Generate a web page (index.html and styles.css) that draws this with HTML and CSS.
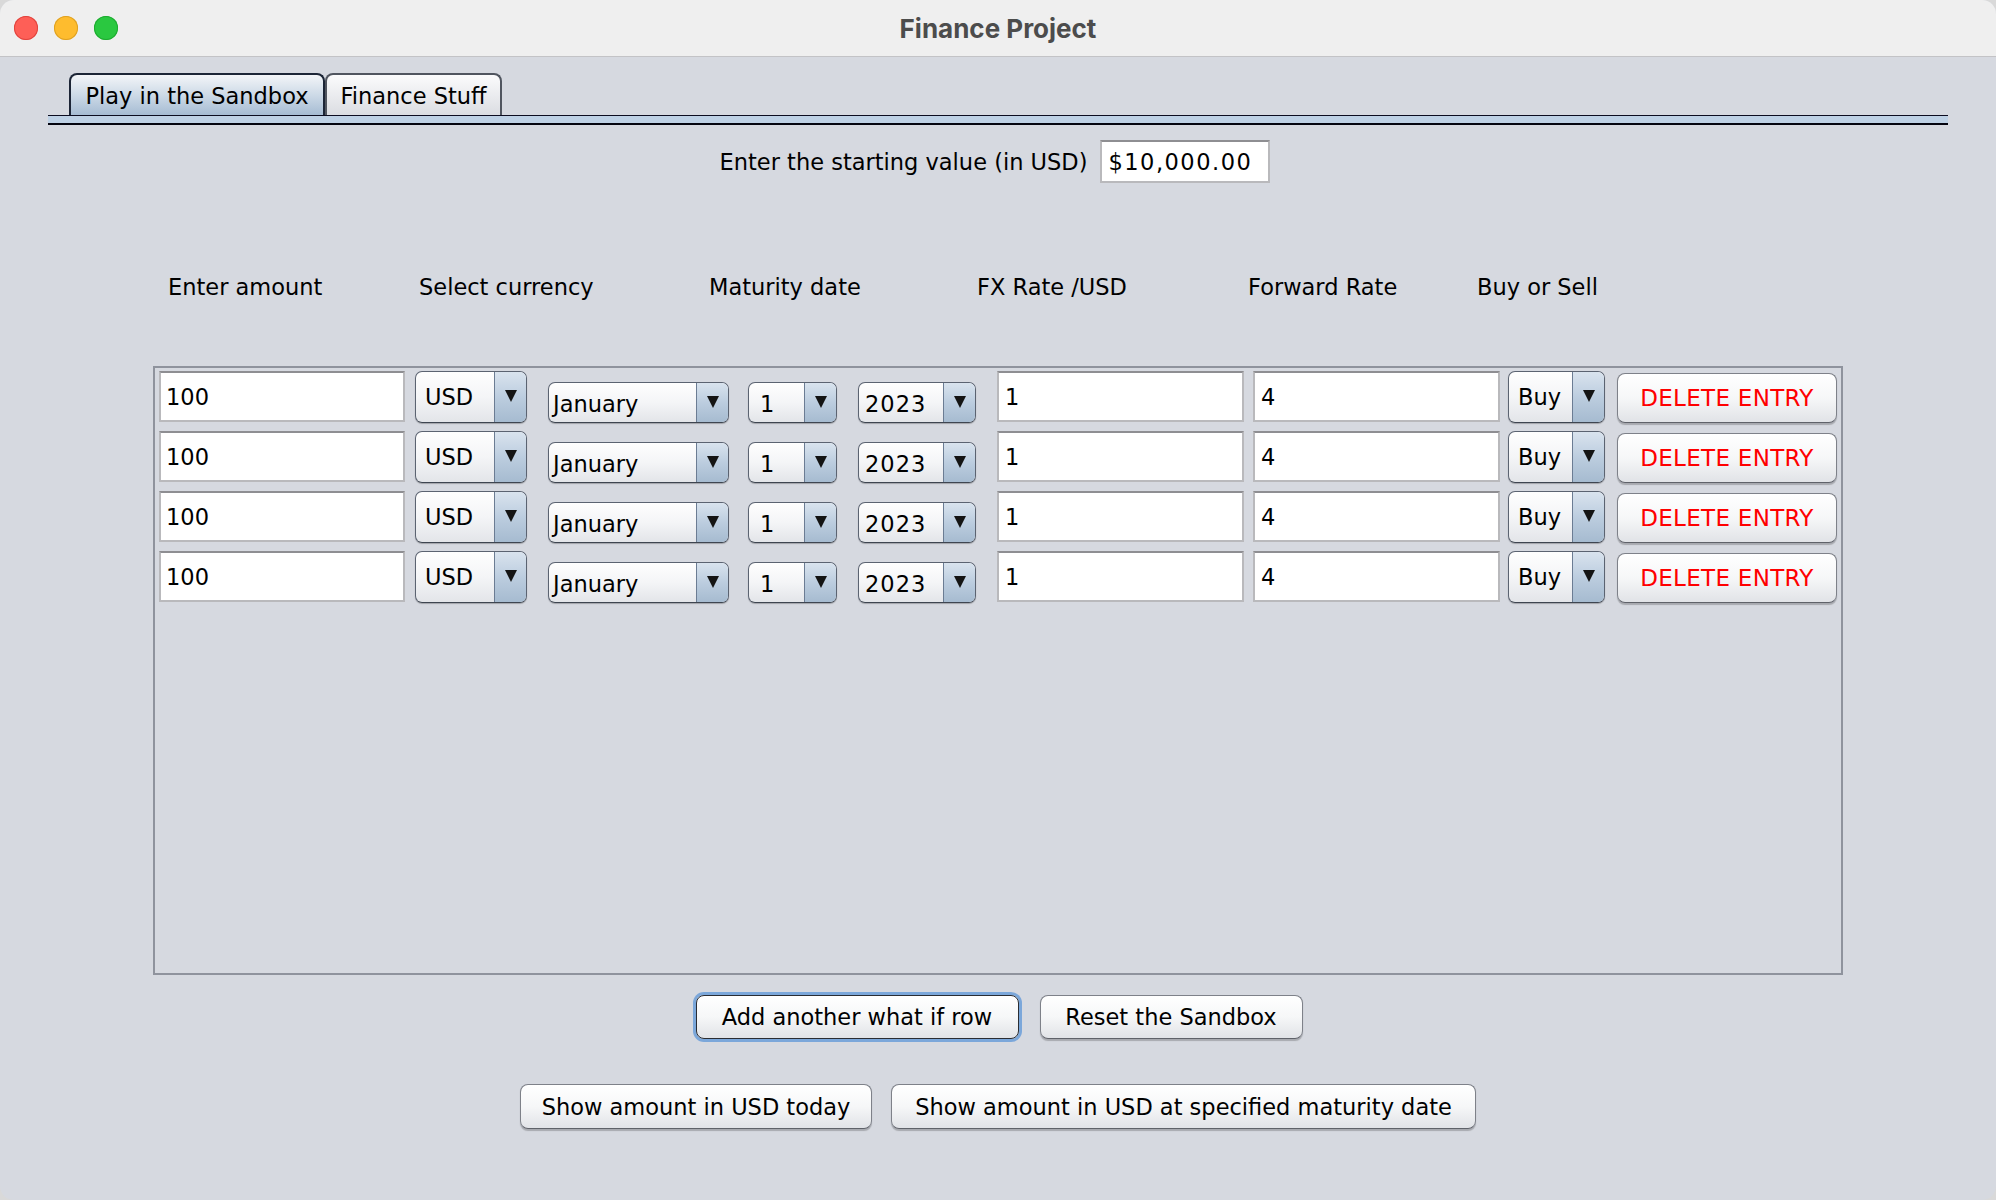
FILE: index.html
```html
<!DOCTYPE html>
<html>
<head>
<meta charset="utf-8">
<title>Finance Project</title>
<link rel="stylesheet" href="styles.css">
</head>
<body>
<div class="window">
  <div class="titlebar">
    <div class="lights">
      <span class="light red"></span>
      <span class="light yellow"></span>
      <span class="light green"></span>
    </div>
    <div class="title">Finance Project</div>
    <div></div>
  </div>
  <div class="content">
    <div class="tabs">
      <div class="tab tab-sandbox selected">Play in the Sandbox</div>
      <div class="tab tab-finance">Finance Stuff</div>
    </div>
    <div class="tab-rule"></div>

    <div class="start-row">
      <span class="start-label">Enter the starting value (in USD)</span>
      <div class="field start-field">$10,000.00</div>
    </div>

    <div class="headers">
      <span class="h h-amount">Enter amount</span>
      <span class="h h-currency">Select currency</span>
      <span class="h h-maturity">Maturity date</span>
      <span class="h h-fx">FX Rate /USD</span>
      <span class="h h-forward">Forward Rate</span>
      <span class="h h-buy">Buy or Sell</span>
    </div>

    <div class="panel">
      <div class="row">
        <div class="field amount">100</div>
        <div class="combo tall cur"><span class="v">USD</span><span class="a"></span></div>
        <div class="combo short month"><span class="v">January</span><span class="a"></span></div>
        <div class="combo short day"><span class="v">1</span><span class="a"></span></div>
        <div class="combo short year"><span class="v">2023</span><span class="a"></span></div>
        <div class="field rate fx">1</div>
        <div class="field rate fwd">4</div>
        <div class="combo tall buy"><span class="v">Buy</span><span class="a"></span></div>
        <div class="btn delete">DELETE ENTRY</div>
      </div>
      <div class="row">
        <div class="field amount">100</div>
        <div class="combo tall cur"><span class="v">USD</span><span class="a"></span></div>
        <div class="combo short month"><span class="v">January</span><span class="a"></span></div>
        <div class="combo short day"><span class="v">1</span><span class="a"></span></div>
        <div class="combo short year"><span class="v">2023</span><span class="a"></span></div>
        <div class="field rate fx">1</div>
        <div class="field rate fwd">4</div>
        <div class="combo tall buy"><span class="v">Buy</span><span class="a"></span></div>
        <div class="btn delete">DELETE ENTRY</div>
      </div>
      <div class="row">
        <div class="field amount">100</div>
        <div class="combo tall cur"><span class="v">USD</span><span class="a"></span></div>
        <div class="combo short month"><span class="v">January</span><span class="a"></span></div>
        <div class="combo short day"><span class="v">1</span><span class="a"></span></div>
        <div class="combo short year"><span class="v">2023</span><span class="a"></span></div>
        <div class="field rate fx">1</div>
        <div class="field rate fwd">4</div>
        <div class="combo tall buy"><span class="v">Buy</span><span class="a"></span></div>
        <div class="btn delete">DELETE ENTRY</div>
      </div>
      <div class="row">
        <div class="field amount">100</div>
        <div class="combo tall cur"><span class="v">USD</span><span class="a"></span></div>
        <div class="combo short month"><span class="v">January</span><span class="a"></span></div>
        <div class="combo short day"><span class="v">1</span><span class="a"></span></div>
        <div class="combo short year"><span class="v">2023</span><span class="a"></span></div>
        <div class="field rate fx">1</div>
        <div class="field rate fwd">4</div>
        <div class="combo tall buy"><span class="v">Buy</span><span class="a"></span></div>
        <div class="btn delete">DELETE ENTRY</div>
      </div>
    </div>

    <div class="btn-row first">
      <div class="btn focused add">Add another what if row</div>
      <div class="btn reset">Reset the Sandbox</div>
    </div>
    <div class="btn-row second">
      <div class="btn today">Show amount in USD today</div>
      <div class="btn maturity">Show amount in USD at specified maturity date</div>
    </div>
  </div>
</div>
</body>
</html>
```

FILE: styles.css
```css
* { box-sizing: border-box; }

html, body {
  margin: 0;
  padding: 0;
}

body {
  background: #d9d9d9;
  font-family: "DejaVu Sans", "Liberation Sans", sans-serif;
}

.window {
  width: 1996px;
  height: 1200px;
  border-radius: 14px;
  overflow: hidden;
  background: #d6d9e0;
  display: flex;
  flex-direction: column;
}

/* ---------- title bar ---------- */
.titlebar {
  height: 57px;
  flex: none;
  background: #efefef;
  border-bottom: 1px solid #c3c3c6;
  display: grid;
  grid-template-columns: 1fr auto 1fr;
  align-items: center;
}

.lights {
  display: flex;
  gap: 16px;
  padding-left: 14px;
}

.light {
  width: 24px;
  height: 24px;
  border-radius: 50%;
}
.light.red { background: #fe5f57; box-shadow: inset 0 0 0 1px #e0443e; }
.light.yellow { background: #febc2e; box-shadow: inset 0 0 0 1px #dea123; }
.light.green { background: #2ac840; box-shadow: inset 0 0 0 1px #1eaa30; }

.title {
  font-family: Inter, "Liberation Sans", sans-serif;
  font-weight: 700;
  font-size: 26px;
  color: #4c4c4c;
  padding-top: 1px;
}

/* ---------- content ---------- */
.content {
  padding: 16px 48px 0;
  font-size: 22.5px;
  color: #000;
  display: flex;
  flex-direction: column;
}

.tabs {
  display: flex;
  margin-left: 21px;
  height: 42px;
}

.tab {
  height: 42px;
  display: flex;
  align-items: center;
  justify-content: center;
  padding-top: 2px;
  border: 2px solid #50555f;
  border-bottom: none;
  border-radius: 8px 8px 0 0;
  background: linear-gradient(#fbfbfc, #dbdde2);
}

.tab-sandbox {
  width: 256px;
  border-color: #1c2536;
  background: linear-gradient(#f3f5f8 0%, #c9d7e5 55%, #a6bcd3 100%);
}

.tab-finance {
  width: 177px;
}

.tab-rule {
  height: 10px;
  border-top: 1.5px solid #0c0c20;
  border-bottom: 2.5px solid #04040f;
  background: #bed1e5;
}

.start-row {
  display: flex;
  justify-content: center;
  align-items: center;
  gap: 13px;
  margin-top: 15px;
  padding-right: 6px;
  height: 43px;
}

.field {
  background: #fff;
  border: 2px solid #b9b9bc;
  border-top-color: #8e8e92;
  display: flex;
  align-items: center;
  padding-left: 4px;
}

.start-field {
  width: 170px;
  height: 43px;
  padding-left: 6px;
  letter-spacing: 1.5px;
}

/* ---------- column headers ---------- */
.headers {
  display: flex;
  margin-top: 91px;
  padding-left: 120px;
  height: 27px;
  line-height: 27px;
}

.h-amount { width: 251px; }
.h-currency { width: 290px; }
.h-maturity { width: 268px; }
.h-fx { width: 271px; }
.h-forward { width: 229px; }

/* ---------- rows panel ---------- */
.panel {
  margin: 65px 105px 0;
  height: 609px;
  border: 2px solid #8f939d;
  padding: 3px 4px;
  display: flex;
  flex-direction: column;
  gap: 8px;
}

.row {
  display: flex;
  align-items: flex-end;
  height: 52px;
}

.amount { width: 246px; height: 51px; align-self: flex-start; padding-left: 5px; }
.rate { width: 247px; height: 51px; align-self: flex-start; padding-left: 6px; }
.fx { margin-left: 21px; }
.fwd { margin-left: 9px; }

.combo {
  display: flex;
  border: 1.5px solid #5b6371;
  border-bottom-color: #3e4550;
  border-radius: 7px;
  overflow: hidden;
  background: linear-gradient(#fefefe 0%, #f4f5f7 50%, #e3e5e9 100%);
  box-shadow: 0 1px 1px rgba(0, 0, 0, 0.25);
}

.combo.tall { height: 52px; }
.combo.short { height: 41px; }

.combo .v {
  flex: 1;
  display: flex;
  align-items: center;
  padding-left: 9px;
  white-space: nowrap;
}

.combo.short .v { padding-top: 3px; }

.combo .a {
  width: 32px;
  flex: none;
  border-left: 1px solid #6b7c93;
  background: linear-gradient(#d9e3ee 0%, #bccddf 50%, #a6bbd0 100%);
  display: flex;
  align-items: center;
  justify-content: center;
}

.combo .a::after {
  content: "";
  width: 0;
  height: 0;
  border-left: 6px solid transparent;
  border-right: 6px solid transparent;
  border-top: 12px solid #141414;
  margin-top: -2px;
}

.cur { width: 112px; margin-left: 10px; }
.month { width: 181px; margin-left: 21px; }
.month .v { padding-left: 4px; }
.day { width: 89px; margin-left: 19px; }
.day .v { padding-left: 11px; }
.year { width: 118px; margin-left: 21px; }
.year .v { padding-left: 6px; letter-spacing: 1px; }
.buy { width: 97px; margin-left: 8px; }
.buy .v { padding-left: 9px; }

/* ---------- buttons ---------- */
.btn {
  border: 1.5px solid #7e8189;
  border-bottom-color: #5f6269;
  border-radius: 8px;
  background: linear-gradient(#ffffff 0%, #f6f7f8 50%, #e1e3e7 100%);
  box-shadow: 0 1.5px 1px rgba(0, 0, 0, 0.22);
  display: flex;
  align-items: center;
  justify-content: center;
  white-space: nowrap;
}

.delete {
  width: 220px;
  height: 50px;
  margin-left: 12px;
  color: #ff0000;
  font-size: 23px;
  letter-spacing: 0.3px;
}

.btn-row {
  display: flex;
  justify-content: center;
}

.btn-row.first {
  margin-top: 20px;
  gap: 21px;
  padding-left: 2px;
}

.btn-row.first .btn { height: 44px; }

.btn.focused {
  border-color: #2a2d33;
  box-shadow: 0 0 0 3px #7ba7da;
}

.add { width: 323px; }
.reset { width: 263px; }

.btn-row.second {
  margin-top: 45px;
  gap: 19px;
}

.btn-row.second .btn { height: 45px; }

.today { width: 352px; }
.maturity { width: 585px; }
```
